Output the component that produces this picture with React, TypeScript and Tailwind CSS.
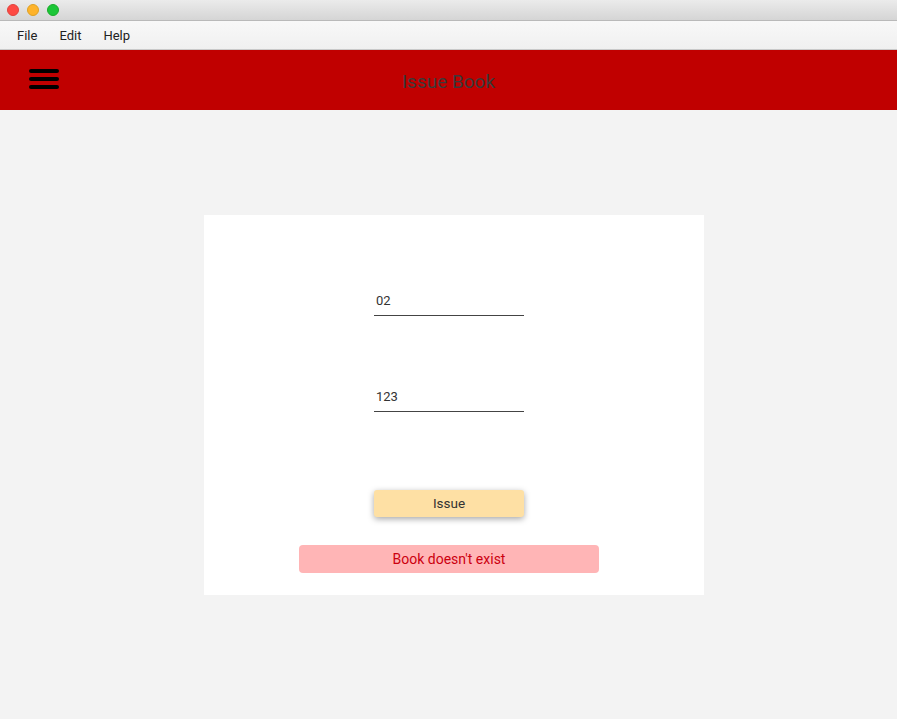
import React from "react";

export default function App() {
  return (
    <div className="w-[897px] h-[719px] flex flex-col bg-[#f3f3f3] overflow-hidden" style={{ fontFamily: "Roboto, 'Noto Sans', sans-serif" }}>
      {/* title bar */}
      <div className="h-[21px] flex items-center gap-[8px] pl-[7px] bg-gradient-to-b from-[#ebebeb] to-[#d5d5d5] border-b border-[#b9b9b9]">
        <span className="w-[12px] h-[12px] rounded-full bg-[#fe4a43] border border-[#e0443e]" />
        <span className="w-[12px] h-[12px] rounded-full bg-[#feb32a] border border-[#dea123]" />
        <span className="w-[12px] h-[12px] rounded-full bg-[#1bc637] border border-[#1aab29]" />
      </div>
      {/* menu bar */}
      <div className="h-[29px] flex items-center pt-[2px] bg-gradient-to-b from-[#f8f8f8] to-[#f0f0f0] border-b border-[#c9c9c9] text-[13px] text-[#222]">
        <span className="ml-[17px]">File</span>
        <span className="ml-[22px]">Edit</span>
        <span className="ml-[22px]">Help</span>
      </div>
      {/* header */}
      <div className="relative h-[60px] bg-[#c00000] flex items-center justify-center">
        <div className="absolute left-[29px] top-[19px] flex flex-col gap-[4px]">
          <span className="block w-[30px] h-[4px] rounded-[2px] bg-black" />
          <span className="block w-[30px] h-[4px] rounded-[2px] bg-black" />
          <span className="block w-[30px] h-[4px] rounded-[2px] bg-black" />
        </div>
        <span className="text-[19px] text-[#3a3a3a] pt-[4px]">Issue Book</span>
      </div>
      {/* content */}
      <div className="flex-1 flex justify-start pl-[204px] pt-[105px]">
        <div className="w-[500px] h-[380px] bg-white flex flex-col items-center pr-[10px] pt-[77px]">
          <div className="w-[150px] h-[24px] border-b border-[#444] flex items-center pl-[2px] pb-[5px] text-[13px] text-[#333]">02</div>
          <div className="w-[150px] h-[24px] mt-[72px] border-b border-[#444] flex items-center pl-[2px] pb-[5px] text-[13px] text-[#333]">123</div>
          <div className="w-[150px] h-[27px] mt-[78px] rounded-[3px] bg-[#fee0a4] shadow-[0_2px_6px_rgba(0,0,0,0.35)] flex items-center justify-center text-[13.5px] text-[#333]">Issue</div>
          <div className="w-[300px] h-[28px] mt-[28px] rounded-[4px] bg-[#ffb5b6] flex items-center justify-center text-[14px] text-[#cc0010]">Book doesn't exist</div>
        </div>
      </div>
    </div>
  );
}
